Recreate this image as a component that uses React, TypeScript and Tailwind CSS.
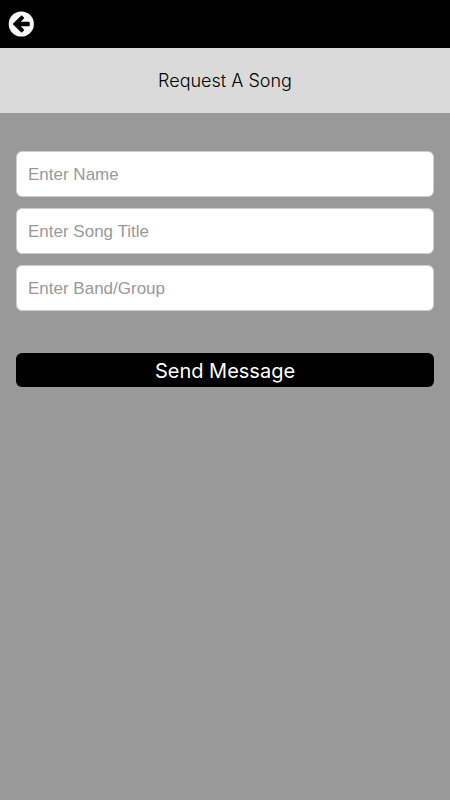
import { useState } from "react";

const fields = [
  { id: "name", label: "Enter Name" },
  { id: "title", label: "Enter Song Title" },
  { id: "band", label: "Enter Band/Group" },
];

function BackIcon() {
  return (
    <svg viewBox="0 0 26 26" className="size-[26px]" aria-hidden="true">
      <circle cx="13.300" cy="13" r="12.600" fill="#f7f7f7" />
      <path
        d="M4.700 13 13 4.700q.6-.6 1.200 0l1.700 1.700q.6.600 0 1.200L12.700 10.700H20.800q.9 0 .9.900v2.800q0 .9-.9.900H12.700l3.200 3.100q.6.600 0 1.200l-1.700 1.700q-.6.600-1.200 0Z"
        fill="#000"
      />
    </svg>
  );
}

export default function App() {
  const [values, setValues] = useState<Record<string, string>>({});

  return (
    <div className="flex min-h-screen flex-col bg-[#999999] font-['Inter',sans-serif]">
      <header className="flex h-12 items-center bg-black px-2">
        <button type="button" aria-label="Back">
          <BackIcon />
        </button>
      </header>
      <h1 className="bg-[#dadada] py-5 text-center text-lg leading-[25px] font-[350] text-black">
        Request A Song
      </h1>
      <form className="flex flex-col px-4 pt-[38px]" onSubmit={(e) => e.preventDefault()}>
        <div className="flex flex-col gap-[11px]">
          {fields.map((f) => (
            <input
              key={f.id}
              id={f.id}
              type="text"
              aria-label={f.label}
              placeholder={f.label}
              value={values[f.id] ?? ""}
              onChange={(e) => setValues({ ...values, [f.id]: e.target.value })}
              className="h-[46px] w-full rounded-md border border-[#cccccc] bg-white px-[11px] pt-0.5 font-['Liberation_Sans',sans-serif] text-[17px] text-black placeholder:text-[#999999]"
            />
          ))}
        </div>
        <button
          type="submit"
          className="mt-[42px] rounded-md bg-black pt-0.5 text-xl leading-8 text-white"
        >
          Send Message
        </button>
      </form>
    </div>
  );
}
